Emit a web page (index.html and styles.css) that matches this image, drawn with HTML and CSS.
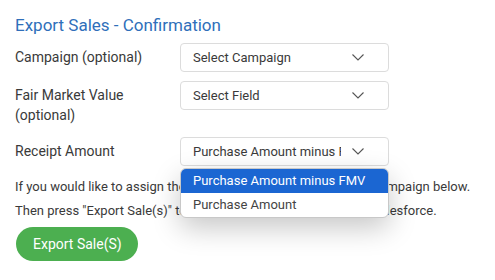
FILE: index.html
```html
<!DOCTYPE html>
<html lang="en">
<head>
    <meta charset="UTF-8">
    <meta name="viewport" content="width=device-width, initial-scale=1.0">
    <title>Export Sales - Confirmation</title>
    <link rel="stylesheet" href="styles.css">
</head>
<body>
    <div class="container">
        <h1>Export Sales - Confirmation</h1>
        <div class="form-row">
            <label class="field-label">Campaign (optional)</label>
            <div class="select-wrap">
                <div class="select">
                    <span class="select-text">Select Campaign</span>
                    <svg class="chevron" width="12" height="7" viewBox="0 0 12 7"><path d="M0.5 0.5 L6 6 L11.5 0.5" fill="none" stroke="#555" stroke-width="1.1"/></svg>
                </div>
            </div>
        </div>
        <div class="form-row">
            <label class="field-label">Fair Market Value<br>(optional)</label>
            <div class="select-wrap">
                <div class="select">
                    <span class="select-text">Select Field</span>
                    <svg class="chevron" width="12" height="7" viewBox="0 0 12 7"><path d="M0.5 0.5 L6 6 L11.5 0.5" fill="none" stroke="#555" stroke-width="1.1"/></svg>
                </div>
            </div>
        </div>
        <div class="form-row">
            <label class="field-label">Receipt Amount</label>
            <div class="select-wrap">
                <div class="select">
                    <span class="select-text">Purchase Amount minus FMV</span>
                    <svg class="chevron" width="12" height="7" viewBox="0 0 12 7"><path d="M0.5 0.5 L6 6 L11.5 0.5" fill="none" stroke="#555" stroke-width="1.1"/></svg>
                </div>
                <ul class="dropdown">
                    <li class="option selected">Purchase Amount minus FMV</li>
                    <li class="option">Purchase Amount</li>
                </ul>
            </div>
        </div>
        <p class="info">
            If you would like to assign these sales to a campaign, select a campaign below.<br>
            Then press "Export Sale(s)" to export the selected sale(s) into Salesforce.
        </p>
        <button type="button" class="export-btn">Export Sale(S)</button>
    </div>
</body>
</html>
```

FILE: styles.css
```css
body {
    font-family: Roboto, "Liberation Sans", sans-serif;
    margin: 0;
    padding: 0;
    color: #3a3a3a;
    background-color: #fff;
}
.container {
    padding: 14px 15px 0 15px;
}
h1 {
    font-size: 17px;
    font-weight: normal;
    line-height: 22px;
    color: #2f6fba;
    margin: 0 0 7px 0;
}
.form-row {
    display: flex;
    align-items: flex-start;
    margin-bottom: 9px;
}
.field-label {
    width: 165px;
    font-size: 14px;
    line-height: 20px;
    padding: 4px 0 3px 0;
}
.select-wrap {
    position: relative;
    width: 209px;
}
.select {
    display: flex;
    align-items: center;
    height: 29px;
    box-sizing: border-box;
    border: 1px solid #dcdcdc;
    border-radius: 4px;
    padding: 0 24px 0 12px;
    font-size: 13px;
    color: #3a3a3a;
    background-color: #fff;
}
.select-text {
    flex: 1;
    min-width: 0;
    overflow: hidden;
    white-space: nowrap;
}
.chevron {
    flex: none;
    margin-left: 11px;
}
.dropdown {
    position: absolute;
    top: 31px;
    left: 0;
    width: 209px;
    box-sizing: border-box;
    margin: 0;
    padding: 0;
    list-style: none;
    background-color: #fff;
    border: 1px solid #c8c8c8;
    border-radius: 6px;
    overflow: hidden;
    box-shadow: 0 10px 28px rgba(0, 0, 0, 0.22);
    z-index: 2;
}
.option {
    height: 24px;
    line-height: 24px;
    padding-left: 12px;
    font-size: 13px;
    color: #444;
    white-space: nowrap;
}
.option.selected {
    background-color: #1b66d2;
    color: #fff;
}
.info {
    margin: 1px 0 4px 0;
    font-size: 13px;
    line-height: 24px;
    color: #3a3a3a;
}
.export-btn {
    font-family: Roboto, "Liberation Sans", sans-serif;
    background-color: #4caf50;
    color: #fff;
    font-size: 14px;
    height: 34px;
    padding: 0 16px 0 17px;
    margin-left: 1px;
    border: none;
    border-radius: 17px;
    cursor: pointer;
}
```
